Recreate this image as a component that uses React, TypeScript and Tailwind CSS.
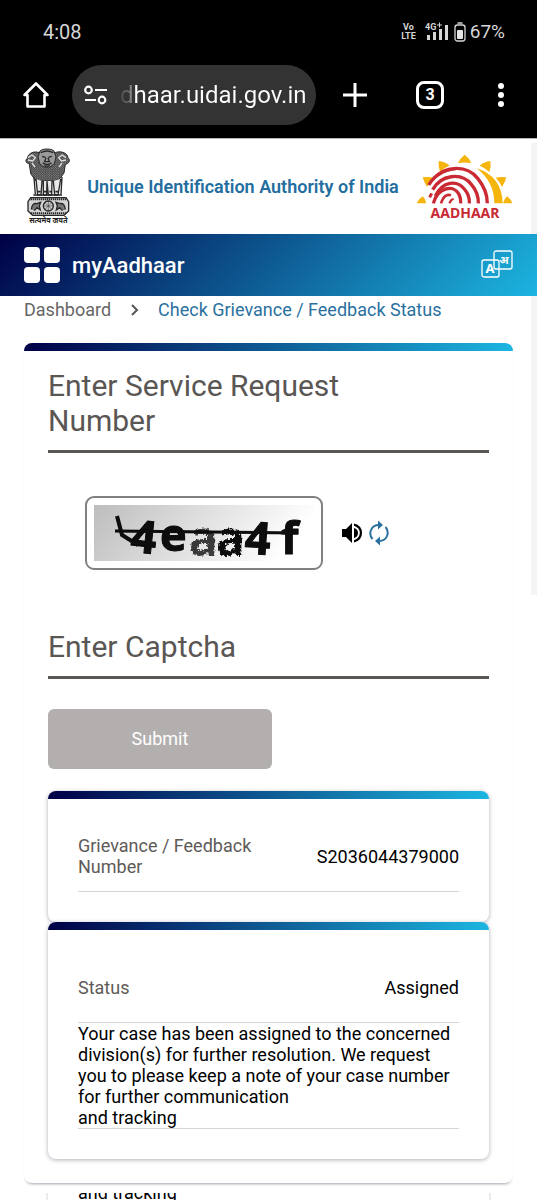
import React from "react";

function StatusBar() {
  return (
    <div className="flex h-16 items-center justify-between pl-[43px] pr-8 text-[#d6d6d6]">
      <span className="text-xl">4:08</span>
      <div className="flex items-center gap-1">
        <span className="mr-1 flex flex-col items-center text-[9px] leading-[9px] font-bold">
          <span>Vo</span>
          <span>LTE</span>
        </span>
        <svg width="26" height="20" viewBox="0 0 26 20" aria-label="4G signal" fill="#d6d6d6">
          <text x="1" y="8" fontSize="9" fontWeight="700" fontFamily="Roboto">4G</text>
          <path d="M13 3h5M15.500.5v5" stroke="#d6d6d6" strokeWidth="1" />
          <rect x="3" y="13" width="3" height="5" />
          <rect x="9" y="10" width="3" height="8" />
          <rect x="15" y="7" width="3" height="11" />
          <rect x="21" y="3" width="3" height="15" />
        </svg>
        <svg width="12" height="20" viewBox="0 0 12 20" aria-label="Battery" fill="none">
          <path d="M3.500 1h5" stroke="#d6d6d6" strokeWidth="1.500" />
          <rect x="1" y="3" width="10" height="16" rx="2.500" stroke="#d6d6d6" strokeWidth="1.300" />
          <rect x="3" y="8" width="6" height="9" rx="1" fill="#e6e6e6" />
        </svg>
        <span className="text-[19px]">67%</span>
      </div>
    </div>
  );
}

function BrowserBar() {
  return (
    <div className="flex h-[74px] items-start pl-5 pr-[26px] text-white">
      <button aria-label="Home" className="mt-[15px] mr-5 shrink-0">
        <svg width="32" height="32" viewBox="0 0 32 32" fill="none" stroke="#fff" strokeWidth="2.600" strokeLinejoin="round">
          <path d="M4.500 16 16 4.500 27.500 16h-3v11.500h-17V16z" />
        </svg>
      </button>
      <div className="mt-px flex h-15 min-w-0 flex-1 items-center rounded-full bg-[#333333] pr-3 pl-3">
        <svg className="mr-3 shrink-0" width="24" height="20" viewBox="0 0 24 20" fill="none" stroke="#fff" strokeWidth="2.200">
          <circle cx="4.500" cy="5" r="3.300" />
          <path d="M11 5h12M1 15h11" />
          <circle cx="18" cy="15" r="3.300" />
        </svg>
        <span className="bg-[linear-gradient(to_right,#444_0,#888_12px,#fff_13px)] bg-clip-text text-2xl whitespace-nowrap text-transparent">
          dhaar.uidai.gov.in
        </span>
      </div>
      <button aria-label="New tab" className="mt-[17px] ml-[25px] shrink-0">
        <svg width="28" height="28" viewBox="0 0 28 28" stroke="#fff" strokeWidth="3">
          <path d="M14 2v24M2 14h24" />
        </svg>
      </button>
      <button aria-label="Open tabs" className="mt-[17px] ml-[47px] flex size-7 shrink-0 items-center justify-center rounded-lg border-[3px] border-white text-base font-bold">
        3
      </button>
      <button aria-label="More options" className="mt-[17px] ml-[47px] shrink-0">
        <svg width="20" height="28" viewBox="0 0 20 28" fill="#fff">
          <circle cx="10" cy="5" r="3" />
          <circle cx="10" cy="14" r="3" />
          <circle cx="10" cy="23" r="3" />
        </svg>
      </button>
    </div>
  );
}

function Emblem() {
  return (
    <svg className="shrink-0" width="46" height="78" viewBox="72 24 138 234" aria-label="State emblem of India" fill="none" stroke="#282828" strokeWidth="3">
      <defs>
        <pattern id="mane" width="7" height="7" patternUnits="userSpaceOnUse">
          <rect width="7" height="7" fill="#444" stroke="none" />
          <circle cx="2" cy="2" r="1.300" fill="#ddd" stroke="none" />
          <circle cx="5.500" cy="5.500" r="1.200" fill="#bbb" stroke="none" />
        </pattern>
      </defs>
      <g transform="translate(0 -7)">
        <path d="M120 46C104 38 84 46 82 62c-8 6-4 16 6 16l4 30 16 22h66l18-24 4-26c12-2 16-12 8-20-2-16-26-22-40-14z" fill="url(#mane)" />
        <path d="M120 40c8-8 34-8 42 0l6 18-5 20-13 10h-18l-13-10-5-20z" fill="#9a9a9a" />
        <path d="M122 45q19-10 38 0M126 56l11 3M156 56l-11 3M138 60l-4 12h14l-4-12M128 75q13 11 27 0M133 83q8 6 16 0" strokeWidth="4" />
        <path d="M84 60l12-8 10 8-8 10-14-3M198 60l-12-8-10 8 8 10 14-3M96 76l9 12M186 76l-9 12" stroke="#ddd" strokeWidth="4" />
        <path d="M108 124l5 48h10l3-42M130 130v42h10l1-42 4 42h10l1-42M160 130l4 42h10l8-48M102 120l4 50M186 118l-3 52" fill="#e9e9e9" strokeWidth="4" />
        <path d="M100 172h86M112 162h10M132 162h8M148 162h8M166 162h10" strokeWidth="5" />
        <path d="M92 180h106l8 12v28l-14 13H98l-14-13v-28z" fill="#d4d4d4" strokeWidth="4" />
        <path d="M92 185h106M92 227h106" strokeWidth="6" strokeDasharray="4 2" />
        <circle cx="145" cy="205" r="15" fill="#ccc" strokeWidth="4" />
        <path d="M145 190v30M130 205h30M135 195l20 20M155 195l-20 20" strokeWidth="1.500" />
        <path d="M94 215q2-20 16-17l12-4-4 11 3 12-10-7-8 9M196 215q-2-20-16-17l-12-4 4 11-3 12 10-7 8 9" fill="#777" strokeWidth="4" />
      </g>
      <text x="145" y="249" textAnchor="middle" fontSize="22" fontWeight="700" fontFamily="'Noto Sans Devanagari', 'Noto Sans', sans-serif" fill="#222" stroke="none">सत्यमेव जयते</text>
    </svg>
  );
}

function AadhaarLogo() {
  return (
    <svg className="shrink-0" width="97" height="72" viewBox="46 36 291 216" aria-label="Aadhaar" fill="none">
      <g fill="#f6b50c">
        <path d="M48 193q6-14 18-21 9 8 11 21z" />
        <path d="M66 115q16-3 32 1-12 12-19 28-9-14-13-29z" />
        <path d="M114 66q19 2 33 14-16 5-29 19-6-18-4-33z" />
        <path d="M192 47q14 10 20 26-20-5-40 0 6-16 20-26z" />
        <path d="M269 66q3 17-3 33-13-13-29-19 14-12 32-14z" />
        <path d="M317 115q-4 16-13 29-7-16-19-28 16-4 32-1z" />
        <path d="M335 193q-5-14-16-21-9 8-12 21z" />
        <path d="M228 88q76 24 78 105h-25q0-64-53-105z" />
      </g>
      <g stroke="#c92a33" strokeWidth="10" strokeLinecap="butt">
        <path d="M84 138C123 74 198 77 231 118q29 35 29 75" />
        <path d="M96 152C120 108 181 98 212 136q22 26 21 57" />
        <path d="M104 171C126 126 169 122 191 150q17 20 15 43" />
        <path d="M98 193C112 143 160 136 175 166q6 12 5 27" />
        <path d="M121 193q11-32 30-24" strokeWidth="8" />
        <path d="M146 193q8-16 12-10" strokeWidth="7" />
        <path d="M93 163l-6 12" strokeWidth="9" />
      </g>
      <path d="M83 139C116 92 160 80 201 94 157 88 119 101 85 137z" fill="#c92a33" />
      <text x="193" y="236" textAnchor="middle" fontSize="42" fontWeight="700" fontFamily="'Noto Sans'" fill="#c92a33" textRendering="geometricPrecision">AADHAAR</text>
    </svg>
  );
}

function SiteHeader() {
  return (
    <header className="flex h-24 items-center justify-between border-t border-[#b5b5b5] bg-white px-6">
      <Emblem />
      <span className="text-lg font-semibold whitespace-nowrap text-[#246e9f]">Unique Identification Authority of India</span>
      <AadhaarLogo />
    </header>
  );
}

function MainNav() {
  return (
    <nav className="relative z-10 flex h-[62px] items-center bg-[linear-gradient(135deg,#000046,#1cb5e0)] px-6 text-white">
      <button aria-label="Menu" className="mr-3 grid grid-cols-2 gap-1">
        {[0, 1, 2, 3].map((n) => (
          <span key={n} className="size-4 rounded bg-white" />
        ))}
      </button>
      <a href="#home" className="flex-1 text-[22px] font-medium">myAadhaar</a>
      <button aria-label="Change language">
        <svg width="32" height="30" viewBox="0 0 32 30" fill="none" stroke="#fff" strokeWidth="1.300">
          <rect x="13" y="1" width="18" height="18" rx="2" />
          <rect x="1" y="10" width="17" height="17" rx="2" />
          <text x="9" y="23" textAnchor="middle" fontSize="13" fontWeight="700" fontFamily="'Noto Sans'" fill="#fff" stroke="none">A</text>
          <text x="23" y="14" textAnchor="middle" fontSize="11" fontWeight="700" fontFamily="'Noto Sans Devanagari', 'Noto Sans', sans-serif" fill="#fff" stroke="none">अ</text>
        </svg>
      </button>
    </nav>
  );
}

function Breadcrumb() {
  return (
    <div className="flex h-[47px] items-start px-6 pt-0.5 text-lg leading-6">
      <a href="#dashboard" className="text-[#666]">Dashboard</a>
      <svg className="mx-4 mt-1" width="15" height="16" viewBox="0 0 15 16" fill="none" stroke="#555" strokeWidth="2">
        <path d="M5 3l5 5-5 5" />
      </svg>
      <a href="#status" className="text-[#2a71a0]">Check Grievance / Feedback Status</a>
    </div>
  );
}

function Field({ id, label }: { id: string; label: string }) {
  return (
    <div className="grid border-b-[3px] border-[#5a5654]">
      <label htmlFor={id} className="col-start-1 row-start-1 max-w-4/5 pb-3 text-3xl leading-[35px] text-[#5a5654]">
        {label}
      </label>
      <input id={id} type="text" className="col-start-1 row-start-1 bg-transparent text-3xl outline-none" />
    </div>
  );
}

function Captcha() {
  return (
    <div className="mt-[43px] mb-[59px] ml-[37px] flex items-center">
      <div className="rounded-[9px] border-2 border-[#808080] p-[7px]">
        <svg className="overflow-visible" width="220" height="56" viewBox="0 0 220 56" aria-label="Captcha">
          <defs>
            <linearGradient id="captcha-bg" x1="0" y1="0" x2="1" y2="0.200">
              <stop offset="0" stopColor="#bdbdbd" />
              <stop offset="0.550" stopColor="#e2e2e2" />
              <stop offset="1" stopColor="#ffffff" />
            </linearGradient>
            <filter id="rough" x="-10%" y="-10%" width="120%" height="120%">
              <feTurbulence type="fractalNoise" baseFrequency="0.450" numOctaves="2" seed="3" />
              <feDisplacementMap in="SourceGraphic" scale="5" xChannelSelector="R" yChannelSelector="G" />
            </filter>
            <filter id="soft">
              <feGaussianBlur stdDeviation="0.600" />
            </filter>
          </defs>
          <rect width="220" height="56" fill="url(#captcha-bg)" />
          <g fontFamily="'Open Sans'" fontWeight="700" fontSize="45" fill="#080808" stroke="#080808" filter="url(#soft)">
            <text x="37" y="48" transform="rotate(6 50 34)">4</text>
            <text x="66" y="46" fontSize="45">e</text>
            <g filter="url(#rough)" strokeWidth="0">
              <text x="95" y="51" fontSize="48" fillOpacity="0.750">a</text>
              <text x="122" y="51" fontSize="48">a</text>
            </g>
            <text x="151" y="49" transform="rotate(4 162 34)">4</text>
            <text x="187" y="49">f</text>
            <path d="M23 11l5 19 16 10" strokeWidth="4" fill="none" />
            <path d="M21 26l183 2" strokeWidth="3" fill="none" />
          </g>
        </svg>
      </div>
      <button aria-label="Play captcha audio" className="ml-[18px]">
        <svg width="22" height="22" viewBox="0 0 22 22" fill="#000">
          <path d="M1 7h4l6-6v20l-6-6H1z" />
          <path d="M13 1.500q8 2 8 9.500t-8 9.500v-2.200q5.800-2 5.800-7.300t-5.800-7.300zM13 6q4 1 4 5t-4 5z" />
        </svg>
      </button>
      <button aria-label="Refresh captcha" className="ml-1.5">
        <svg width="20" height="26" viewBox="0 0 20 26" fill="none" stroke="#2a71a0" strokeWidth="2">
          <path d="M3.500 19Q0 15 2 10q2-5 8-5M16.500 7q3.500 4 1.500 9-2 5-8 5" />
          <path d="M9 .5 14 5 9 9.500zM11 16.500 6 21l5 4.500z" fill="#2a71a0" stroke="none" />
        </svg>
      </button>
    </div>
  );
}

function DetailCard({ label, value, children }: { label: string; value: string; children?: React.ReactNode }) {
  return (
    <section className="overflow-hidden rounded-lg bg-white pb-[30px] shadow-[0_1px_4px_rgba(30,30,60,0.350)]">
      <div className="h-2 bg-[linear-gradient(to_right,#000046,#1cb5e0)]" />
      <div className="px-[30px]">
        <div className="flex min-h-[93px] items-center justify-between border-b border-[#d6d6d6] pt-[22px]">
          <span className="max-w-48 text-lg leading-[21px] text-[#5e5a58]">{label}</span>
          <span className="text-lg leading-[21px] text-black">{value}</span>
        </div>
        {children}
      </div>
    </section>
  );
}

export default function App() {
  return (
    <div className="relative bg-white font-['Roboto',sans-serif]">
      <div className="bg-black">
        <StatusBar />
        <BrowserBar />
      </div>
      <SiteHeader />
      <MainNav />
      <Breadcrumb />
      <main className="mx-6 overflow-hidden rounded-lg shadow-[0_3px_3px_-2px_rgba(30,30,60,0.400)]">
        <div className="h-2 bg-[linear-gradient(to_right,#000046,#1cb5e0)]" />
        <form className="px-6 pt-[17px]" onSubmit={(e) => e.preventDefault()}>
          <Field id="service-request" label="Enter Service Request Number" />
          <Captcha />
          <Field id="captcha" label="Enter Captcha" />
          <button type="submit" className="mt-[30px] h-15 w-[224px] rounded-md bg-[#b3afaf] text-lg text-white">
            Submit
          </button>
        </form>
        <div className="px-6 pt-[22px] pb-6">
          <DetailCard label="Grievance / Feedback Number" value="S2036044379000" />
          <DetailCard label="Status" value="Assigned">
            <p className="border-b border-[#d6d6d6] text-lg leading-[21px] text-black">
              Your case has been assigned to the concerned division(s) for further resolution. We request you to please keep a note of your case number for further communication
              <br />
              and tracking
            </p>
          </DetailCard>
        </div>
      </main>
      <div className="mx-[46px] mt-[10px] flex h-[7px] items-end overflow-hidden border-x-2 border-[#ebebeb] px-[30px] text-lg leading-[14px]">
        and tracking
      </div>
      <div className="absolute top-[143px] right-0 h-[452px] w-1.5 bg-[#f4f4f4]" />
    </div>
  );
}
